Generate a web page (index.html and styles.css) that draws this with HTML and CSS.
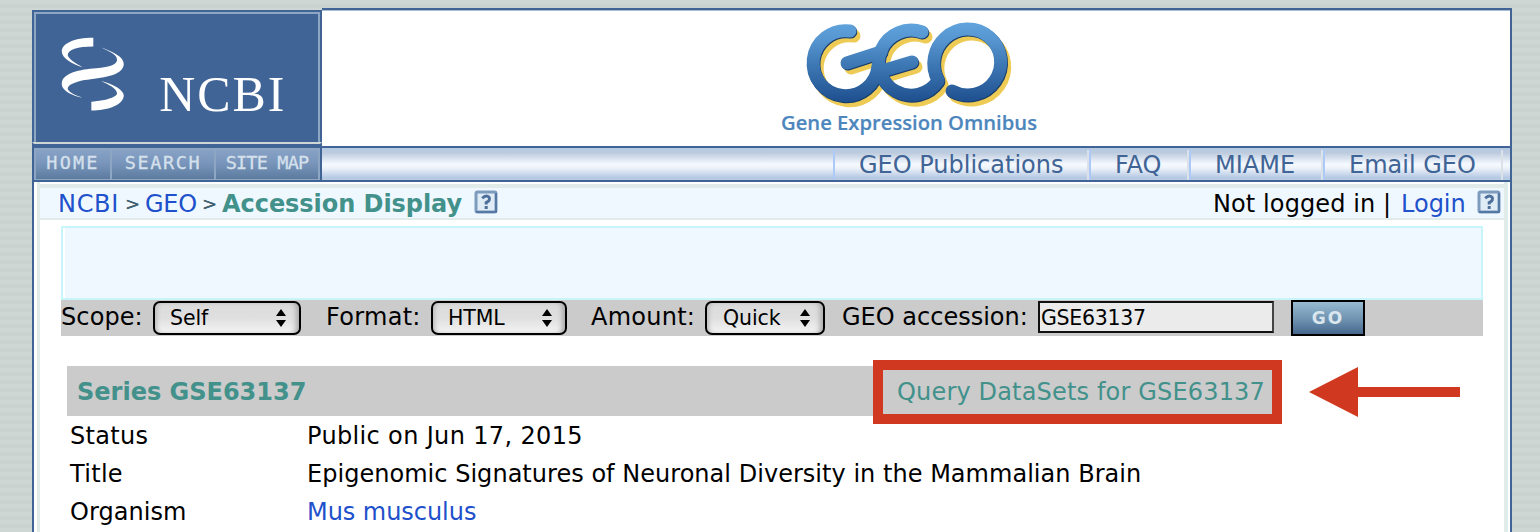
FILE: index.html
```html
<!DOCTYPE html>
<html lang="en">
<head>
<meta charset="utf-8">
<title>GEO Accession viewer</title>
<link rel="stylesheet" href="styles.css">
</head>
<body>
<div class="page">
  <header class="masthead">
    <div class="brand">
      <a class="ncbi"><svg width="286" height="130" viewBox="36 14 286 130">
        <path fill="#fff" d="M94 38V47C78 47 68 50 68 56C69 60 77 65 83 68C73 65 62 59 62 52C62 44 74 38 94 38Z"/>
        <path fill="#fff" d="M102 48C113 52 125 57 125 65C124 77 102 79 85 81C75 83 68 86 68 90C69 94 77 97 83 99C72 97 61 91 62 84C63 74 80 70 97 69C111 68 119 65 118 60C118 55 110 52 102 48Z"/>
        <path fill="#fff" d="M102 82C114 85 125 91 125 97C124 107 108 112 92 112V103C108 102 119 98 118 94C117 89 110 86 102 82Z"/>
        <text class="ncbi-name" x="161" y="113" textLength="129" lengthAdjust="spacingAndGlyphs">NCBI</text>
      </svg></a>
      <nav class="tabs"><a class="home">HOME</a><a class="search">SEARCH</a><a class="map">SITE MAP</a></nav>
    </div>
    <div class="banner">
      <div class="geo">
        <svg width="270" height="136" viewBox="775 10 270 136">
          <defs><linearGradient id="blue" gradientUnits="userSpaceOnUse" x1="0" y1="24" x2="0" y2="102"><stop offset="0" stop-color="#5fa2dc"/><stop offset=".2" stop-color="#5796d0"/><stop offset=".5" stop-color="#3f7ab6"/><stop offset="1" stop-color="#1e4f8e"/></linearGradient>
          <g id="word" fill="none" stroke-width="13" stroke-linecap="round" stroke-linejoin="round">
            <path d="M850 31A32.5 32.5 0 1 0 878 66"/>
            <path d="M847 63L881 52"/>
            <path d="M882 71L912 62"/>
            <path d="M922 32A32.5 32.5 0 1 0 938 81"/>
            <path d="M938 80C930 65 934 48 945 38A33 33 0 1 1 952 91"/>
          </g></defs>
          <use href="#word" stroke="#eecb55" transform="translate(4 5)"/>
          <use href="#word" stroke="#173b6b" transform="translate(.8 1)"/>
          <use href="#word" stroke="url(#blue)"/>
          <text class="geo-name" x="781" y="130" textLength="256" lengthAdjust="spacingAndGlyphs">Gene Expression Omnibus</text>
        </svg>
      </div>
      <nav class="menu"><a class="pubs">GEO Publications</a><a class="faq">FAQ</a><a class="miame">MIAME</a><a class="email">Email GEO</a></nav>
    </div>
  </header>
  <main class="content">
    <div class="crumbs">
      <a class="link c1">NCBI</a><span class="gt">&gt;</span><a class="link c2">GEO</a><span class="gt">&gt;</span><b class="here">Accession Display</b>
      <svg class="help" width="24" height="24"><use href="#q"/></svg>
      <span class="login"><span class="state">Not logged in |</span><a class="link signin">Login</a></span>
      <svg class="help" width="24" height="24"><g id="q"><rect x="2" y="2" width="20" height="20" rx="1.5" fill="#dfebf5" stroke="#7d9bbd" stroke-width="3"/><path d="M2 22H22V3" fill="none" stroke="#5578a4" stroke-width="2"/><path d="M8.2 8.2Q12 4.5 15 7.2Q17 10 12.2 12.5V14.5M12.2 16V19" fill="none" stroke="#4d6f9b" stroke-width="3"/></g></svg>
    </div>
    <div class="notice"></div>
    <form class="query">
      <label class="l-scope">Scope:</label>
      <div class="select s-scope"><span>Self</span><svg width="10" height="18"><path d="M0 7L5 0L10 7ZM0 11H10L5 18Z"/></svg></div>
      <label class="l-format">Format:</label>
      <div class="select s-format"><span>HTML</span><svg width="10" height="18"><path d="M0 7L5 0L10 7ZM0 11H10L5 18Z"/></svg></div>
      <label class="l-amount">Amount:</label>
      <div class="select s-amount"><span>Quick</span><svg width="10" height="18"><path d="M0 7L5 0L10 7ZM0 11H10L5 18Z"/></svg></div>
      <label class="l-acc">GEO accession:</label>
      <input class="acc" value="GSE63137">
      <button class="go" type="button">GO</button>
    </form>
    <section class="record">
      <div class="title-row"><b class="series">Series GSE63137</b>
        <a class="callout">Query DataSets for GSE63137</a>
        <svg class="arrow" width="151" height="50"><path fill="#d03820" d="M0 25L49 0V20H151V30H49V50Z"/></svg>
      </div>
      <dl class="fields">
        <dt class="f-status">Status</dt><dd class="v-status">Public on Jun 17, 2015</dd>
        <dt class="f-title">Title</dt><dd class="v-title">Epigenomic Signatures of Neuronal Diversity in the Mammalian Brain</dd>
        <dt class="f-org">Organism</dt><dd class="v-org"><a class="link">Mus musculus</a></dd>
      </dl>
    </section>
  </main>
</div>
</body>
</html>
```
FILE: styles.css
```css
* { box-sizing: border-box; }
body { margin: 0; height: 532px; overflow: hidden; font: 24px/30px Verdana, "DejaVu Sans", sans-serif; color: #000; background: repeating-linear-gradient(#ced7d4 0 4px, #cad3d0 4px 8px); }
a { text-decoration: none; white-space: nowrap; }
.link { color: #2050cb; }
.page { width: 1480px; height: 532px; margin-left: 32px; padding-top: 8px; }
.masthead { display: flex; height: 174px; border-bottom: 2px solid #406495; }
.brand { width: 290px; margin-top: 2px; background: #406495; padding: 2px 2px 0; }
.ncbi { display: block; height: 130px; border: 2px solid #8ca6c4; border-bottom: 0; }
.ncbi svg { display: block; width: 282px; height: 128px; overflow: hidden; }
.ncbi-name { font: 51px "Liberation Serif", serif; fill: #fff; letter-spacing: 2px; }
.tabs { display: flex; height: 38px; margin: 0 -2px; border: 2px solid #406495; border-top: 2px solid #ced7d4; border-bottom: 0; padding-top: 4px; }
.tabs a { display: flex; align-items: center; justify-content: center; background: linear-gradient(#87a2c5, #7995bb 45%, #5c7b9f); border: solid #8ca6c4; border-width: 2px 2px 1px 0; padding-bottom: 3px; color: #d5e0ec; font: 18.5px/1 "DejaVu Sans Mono", monospace; -webkit-text-stroke: .3px #d5e0ec; white-space: nowrap; }
.tabs .home { width: 78px; border-left-width: 2px; letter-spacing: 2.2px; }
.tabs .search { width: 104px; letter-spacing: 1.6px; }
.tabs .map { width: 104px; letter-spacing: -.8px; }
.banner { width: 1190px; background: #fff; border-top: 2px solid #406495; border-right: 2px solid #406495; box-shadow: inset 0 1px #aabdd5; }
.geo { height: 136px; padding-left: 453px; }
.geo svg { display: block; }
.geo-name { font: 600 20.5px "Open Sans", sans-serif; fill: #4c86bd; stroke: #4c86bd; stroke-width: .2px; }
.menu { display: flex; height: 34px; border-top: 2px solid #406495; background: linear-gradient(#b4c9e5, #bccbdd 15%, #f5f9ff 50%, #eef3fa 62%, #b7cae3 92%, #b7cae3); padding-left: 510px; }
.menu a { height: 30px; margin-top: 2px; border-left: 2px solid #adc9fa; border-right: 2px solid #dce0e7; line-height: 31px; color: #406495; padding-left: 24px; }
.pubs { width: 256px; margin-left: 1px; }
.faq { width: 100px; }
.miame { width: 134px; }
.email { width: 180px; }
.content { height: 350px; background: #fff; border: solid #406495; border-width: 0 2px; box-shadow: inset 3px 0 #fff, inset 6px 0 #e1ecea, inset -2px 0 #fff, inset -6px 0 #e1ecea; padding-top: 2px; }
.crumbs { display: flex; height: 36px; margin: 0 6px; border-top: 4px solid #e1ecea; border-bottom: 2px solid #e1ecea; background: #f0f8ff; padding-left: 18px; line-height: 32px; white-space: nowrap; }
.c1 { width: 67px; letter-spacing: .7px; }
.gt { font-size: 18px; color: #406070; width: 20px; text-shadow: 0 0 #406070; }
.c2 { width: 57px; letter-spacing: -.25px; }
.here { width: 252px; color: #42918b; letter-spacing: -.05px; }
.help { margin-top: 2px; flex: none; }
.login { margin-left: 715px; width: 264px; display: flex; flex: none; }
.state { width: 188px; letter-spacing: .1px; }
.notice { width: 1422px; height: 74px; margin: 6px 0 0 27px; border: 2px solid #c8f5fc; box-shadow: inset 2px 0 #fff; background: #f0f8ff; }
.query { display: flex; align-items: flex-start; width: 1422px; height: 36px; margin-left: 27px; background: #cbcbcb; white-space: nowrap; }
.query label { line-height: 35px; }
.l-scope { width: 92px; letter-spacing: .1px; }
.l-format { width: 105px; margin-left: 25px; letter-spacing: .3px; }
.l-amount { width: 114px; margin-left: 24px; letter-spacing: .25px; }
.l-acc { width: 196px; margin-left: 17px; }
.select { display: flex; align-items: center; justify-content: space-between; height: 34px; margin-top: 1px; border: 2px solid #000; border-radius: 7px; background: linear-gradient(#dbdbdb, #dfdfdf 50%, #f4f4f4); padding: 0 13px 0 15px; font-size: 20.5px; letter-spacing: -.1px; box-shadow: inset -5px 0 5px -2px #aaa, inset 4px 0 4px -2px #bbb; }
.select svg { margin-top: -1px; }
.s-scope { width: 148px; }
.s-format { width: 136px; }
.s-amount { width: 120px; padding-left: 16px; }
.acc { width: 236px; height: 32px; margin: 1px 0 0; padding: 2px 1px 0; border: 2px solid #111; border-right-color: #444; background: #ebebeb; font: 20.5px "DejaVu Sans", sans-serif; letter-spacing: -.3px; color: #000; border-radius: 0; }
.go { width: 74px; height: 36px; margin-left: 17px; padding: 0 0 1px; border: 2px solid #000; background: linear-gradient(#96bbd1, #6e92b0 55%, #47688f); color: #dae6ee; font: bold 17px "DejaVu Sans", sans-serif; letter-spacing: 2px; }
.record { padding: 30px 0 0 33px; }
.title-row { display: flex; align-items: center; width: 1215px; height: 50px; background: #cbcbcb; color: #42918b; }
.series { width: 806px; padding: 2px 0 0 10px; flex: none; }
.callout { width: 409px; height: 64px; flex: none; margin-top: 2px; border: 10px solid #d03820; padding: 7px 0 0 14px; color: #42918b; background: #cbcbcb; letter-spacing: .17px; }
.arrow { flex: none; margin: 2px 0 0 27px; }
.fields { display: grid; grid-template-columns: 237px 1fr; grid-auto-rows: 38px; margin: 1px 0 0 3px; line-height: 38px; white-space: nowrap; }
.fields dd { margin: 0; }
.f-status { letter-spacing: .3px; }
.f-title { letter-spacing: .3px; }
.f-org { letter-spacing: .05px; }
.v-status { letter-spacing: .35px; }
.v-title { letter-spacing: .03px; }
.v-org { letter-spacing: -.05px; }
```
